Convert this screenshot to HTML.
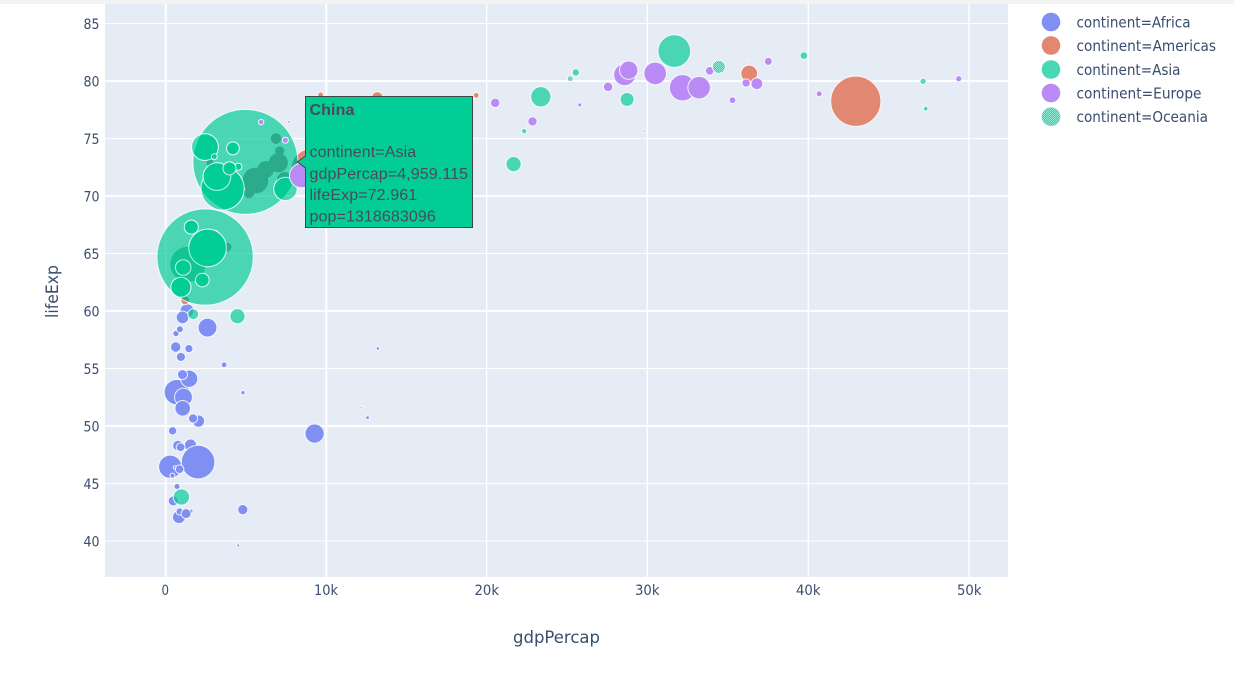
<!DOCTYPE html>
<html lang="en">
<head>
<meta charset="utf-8">
<title>Gapminder bubble chart</title>
<style>
html,body{margin:0;padding:0;background:#fff;width:1234px;height:680px;overflow:hidden}
svg{display:block}
.t{font-family:"DejaVu Sans","Liberation Sans",sans-serif;fill:#3a4d6e}
.h{font-family:"Liberation Sans",Arial,sans-serif;fill:#484c58;font-size:16px;letter-spacing:.1px}
</style>
</head>
<body>
<svg id="c" xmlns="http://www.w3.org/2000/svg" width="1234" height="680" viewBox="0 0 1234 680">
<defs>
<pattern id="oc" width="2" height="2" patternUnits="userSpaceOnUse"><rect width="2" height="2" fill="#2ed6ab"/><rect width="1" height="1" fill="#8fe9d2"/><rect x="1" y="1" width="1" height="1" fill="#8fe9d2"/></pattern>
<clipPath id="big"><circle cx="245.4" cy="161.9" r="52"/><circle cx="205.1" cy="256.9" r="47.7"/></clipPath>
</defs>
<rect x="0" y="0" width="1234" height="4" fill="#f3f3f3"/>
<rect x="105" y="4" width="903" height="573" fill="#e5ecf6"/>
<g stroke="#fff" fill="none">
<path d="M105 23.5H1008M105 138.7H1008M105 253.5H1008M105 368.6H1008M105 483.6H1008M105 541H1008" stroke-width="1.1"/>
<path d="M105 81H1008M105 196H1008M105 311H1008M105 426H1008" stroke-width="1.7"/>
<path d="M165.7 4V577M326.3 4V577" stroke-width="2"/>
<path d="M486.7 4V577M647.3 4V577M808.3 4V577M969 4V577" stroke-width="1.4"/>
</g>
<g id="pts"></g>
<g class="t" font-size="14.4" text-anchor="end">
<text x="99.5" y="29" textLength="16" lengthAdjust="spacingAndGlyphs">85</text>
<text x="99.5" y="86.5" textLength="16" lengthAdjust="spacingAndGlyphs">80</text>
<text x="99.5" y="144" textLength="16" lengthAdjust="spacingAndGlyphs">75</text>
<text x="99.5" y="201.5" textLength="16" lengthAdjust="spacingAndGlyphs">70</text>
<text x="99.5" y="259" textLength="16" lengthAdjust="spacingAndGlyphs">65</text>
<text x="99.5" y="316.5" textLength="16" lengthAdjust="spacingAndGlyphs">60</text>
<text x="99.5" y="374" textLength="16" lengthAdjust="spacingAndGlyphs">55</text>
<text x="99.5" y="431.5" textLength="16" lengthAdjust="spacingAndGlyphs">50</text>
<text x="99.5" y="489" textLength="16" lengthAdjust="spacingAndGlyphs">45</text>
<text x="99.5" y="546.5" textLength="16" lengthAdjust="spacingAndGlyphs">40</text>
</g>
<g class="t" font-size="14.4">
<text x="161.5" y="595" textLength="7.5" lengthAdjust="spacingAndGlyphs">0</text>
<text x="314" y="595" textLength="24" lengthAdjust="spacingAndGlyphs">10k</text>
<text x="474.5" y="595" textLength="24.5" lengthAdjust="spacingAndGlyphs">20k</text>
<text x="635" y="595" textLength="24.5" lengthAdjust="spacingAndGlyphs">30k</text>
<text x="796" y="595" textLength="24.5" lengthAdjust="spacingAndGlyphs">40k</text>
<text x="957" y="595" textLength="24.5" lengthAdjust="spacingAndGlyphs">50k</text>
</g>
<text class="t" x="513" y="643" font-size="17" textLength="87" lengthAdjust="spacingAndGlyphs">gdpPercap</text>
<text class="t" transform="translate(58 318) rotate(-90)" font-size="17" textLength="53" lengthAdjust="spacingAndGlyphs">lifeExp</text>
<g>
<circle cx="1051" cy="22" r="9.3" fill="#7f90f2"/>
<circle cx="1051" cy="45.5" r="9.3" fill="#e28772"/>
<circle cx="1051" cy="69.5" r="9.3" fill="#48d8b4"/>
<circle cx="1051" cy="93" r="9.3" fill="#bb8bf5"/>
<circle cx="1051" cy="116.7" r="9.3" fill="url(#oc)"/>
</g>
<g class="t" font-size="14.8">
<text x="1076.5" y="27.5" textLength="114" lengthAdjust="spacingAndGlyphs">continent=Africa</text>
<text x="1076.5" y="51" textLength="139.5" lengthAdjust="spacingAndGlyphs">continent=Americas</text>
<text x="1076.5" y="75" textLength="104" lengthAdjust="spacingAndGlyphs">continent=Asia</text>
<text x="1076.5" y="98.5" textLength="125" lengthAdjust="spacingAndGlyphs">continent=Europe</text>
<text x="1076.5" y="122" textLength="131.5" lengthAdjust="spacingAndGlyphs">continent=Oceania</text>
</g>
<path d="M305.5 96.5H472.5V227.5H305.5V168L297.3 162L305.5 156Z" fill="#03cd96" stroke="#444" stroke-width="1"/>
<text class="h" x="309.5" y="115" font-weight="bold">China</text>
<text class="h" x="309.5" y="157">continent=Asia</text>
<text class="h" x="309.5" y="179">gdpPercap=4,959.115</text>
<text class="h" x="309.5" y="200">lifeExp=72.961</text>
<text class="h" x="309.5" y="221.5">pop=1318683096</text>
</svg>
<script>
(function(){
var D={
af:"72.301,33.33,6223 42.731,12.42,4797 56.728,8.08,1441 50.728,1.64,12570 52.295,14.33,1217 49.58,8.39,430 50.43,17.7,2042 44.741,4.37,706 50.651,10.24,1704 65.152,.71,986 46.462,64.61,278 55.322,3.8,3633 48.328,18.01,1545 54.791,.5,2082 71.338,80.26,5581 51.579,.55,12154 58.04,4.91,641 52.947,76.51,691 56.735,1.45,13206 59.448,1.69,753 60.022,22.87,1328 56.007,9.95,943 46.388,1.47,579 54.11,35.61,1463 42.592,2.01,1569 45.678,3.19,415 73.952,6.04,12058 59.443,19.17,1045 48.303,13.33,759 54.467,12.03,1043 64.164,3.27,1803 72.801,1.25,10957 71.164,33.76,3820 42.082,19.95,824 52.906,2.06,4811 56.867,12.89,620 46.859,135.03,2014 76.442,.8,7670 46.242,8.86,863 65.528,.2,1598 63.062,12.27,1712 42.568,6.14,863 48.159,9.12,926 49.339,44,9270 58.556,42.29,2602 39.613,1.13,4513 52.517,38.14,1107 58.42,5.7,883 73.923,10.28,7093 51.542,29.17,1056 42.384,11.75,1271 43.487,12.31,470",
am:"75.32,40.3,12779 65.554,9.12,3822 72.39,190.01,9066 80.653,33.39,36319 78.553,16.28,13172 72.889,44.23,7007 78.782,4.13,9645 78.273,11.42,8948 72.235,9.32,6025 74.994,13.76,6873 71.878,6.94,5728 70.259,12.57,5186 60.916,8.5,1202 70.198,7.48,3548 72.567,2.78,7321 76.195,108.7,11978 72.899,5.68,2749 75.537,3.24,9809 71.752,6.67,4173 71.421,28.67,7409 78.746,3.94,19329 69.819,1.06,18009 78.242,301.14,42952 76.384,3.45,10611 73.747,26.08,11416",
as:"43.828,31.89,975 75.635,.71,29796 64.062,150.45,1391 59.723,14.13,1714 72.961,1318.68,4959 82.208,6.98,39725 64.698,1110.4,2452 70.65,223.55,3541 70.964,69.45,11606 59.545,27.5,4471 80.745,6.43,25523 82.603,127.47,31656 72.535,6.05,4519 67.297,23.3,1593 78.623,49.04,23348 77.588,2.51,47307 71.993,3.92,10461 74.241,24.82,12452 66.803,2.87,3096 62.069,47.76,944 63.785,28.9,1091 75.64,3.2,22316 65.483,169.27,2606 71.688,91.08,3190 72.777,27.6,21655 79.972,4.55,47143 72.396,20.38,3970 74.143,19.31,4185 78.4,23.17,28718 70.616,65.07,7458 74.249,85.26,2442 73.422,4.02,3025 62.698,22.21,2281",
eu:"76.423,3.6,5937 79.829,8.2,36126 79.441,10.39,33693 74.852,4.55,7446 73.005,7.32,10681 75.748,4.49,14619 76.486,10.23,22833 78.332,5.47,35278 79.313,5.24,33207 80.657,61.08,30470 79.406,82.4,32170 79.483,10.71,27538 73.338,9.96,18009 81.757,.3,36181 78.885,4.11,40676 80.546,58.15,28570 74.543,.68,9254 79.762,16.57,36798 80.196,4.63,49357 75.563,38.52,15390 78.098,10.64,20510 72.476,22.28,10808 74.002,10.15,9787 74.663,5.45,18678 77.926,2.01,25768 80.941,40.45,28821 80.884,9.03,33860 81.701,7.55,37506 71.777,71.16,8458 79.425,60.78,33203",
oc:"81.235,20.43,34435 80.204,4.12,25185"};
var NS="http://www.w3.org/2000/svg",g=document.getElementById("pts");
function P(s){return s.split(" ").map(function(v){var a=v.split(",");return{x:165.7+a[2]*0.016066,y:541-(a[0]-40)*11.5,r:1.4457*Math.sqrt(+a[1])};});}
function C(p,fill,op,so,par,sw){var c=document.createElementNS(NS,"circle");c.setAttribute("cx",p.x.toFixed(1));c.setAttribute("cy",p.y.toFixed(1));c.setAttribute("r",p.r.toFixed(2));c.setAttribute("fill",fill);c.setAttribute("fill-opacity",op);if(so){c.setAttribute("stroke","#fff");c.setAttribute("stroke-opacity",so);c.setAttribute("stroke-width",sw||1);}par.appendChild(c);}
function G(clip){var e=document.createElementNS(NS,"g");if(clip)e.setAttribute("clip-path","url(#big)");g.appendChild(e);return e;}
var af=P(D.af),am=P(D.am),as=P(D.as),eu=P(D.eu),oc=P(D.oc);
var g1=G();
af.forEach(function(p){C(p,"#7f90f2",1,.85,g1);});
am.forEach(function(p){C(p,"#e28772",1,.85,g1);});
as.forEach(function(p){C(p,"#00cc96",.68,.85,g1);});
var g2=G(true);
af.concat(am).forEach(function(p){C(p,"#2bab8b",1,0,g2);});
var g3=G(true);
as.forEach(function(p,i){
  if(i==2){C(p,"#12c592",1,0,g3);return;}
  if(p.r<45)C(p,"#02cd96",1,.75,g3);
});
var g4=G();
eu.forEach(function(p){C(p,"#bb8bf5",1,.85,g4);});
oc.forEach(function(p){C(p,"url(#oc)",1,.85,g4);});
})();
</script>
</body>
</html>
